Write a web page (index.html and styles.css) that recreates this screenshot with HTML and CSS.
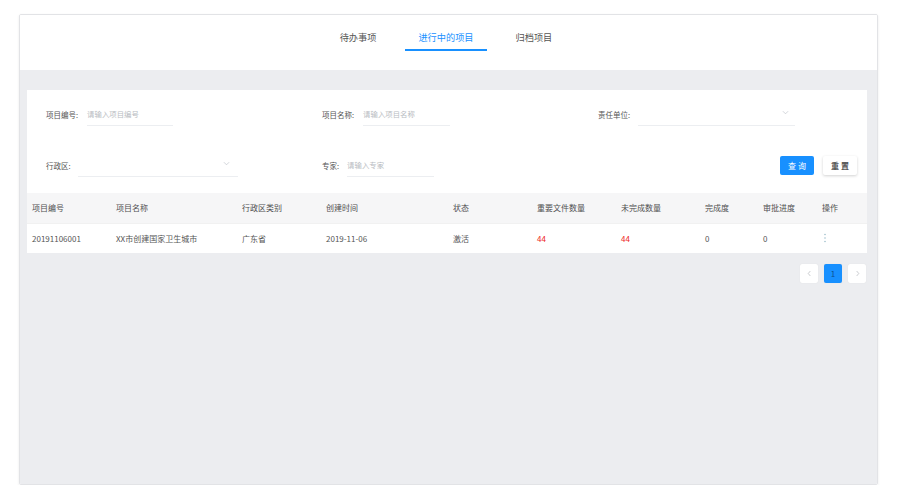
FILE: index.html
```html
<!DOCTYPE html>
<html lang="zh">
<head>
<meta charset="utf-8">
<link rel="stylesheet" href="styles.css">
</head>
<body>
<div class="frame">
  <div class="header">
    <div class="tab">待办事项</div>
    <div class="tab active">进行中的项目</div>
    <div class="tab">归档项目</div>
  </div>
  <div class="main">
    <div class="card">
      <div class="form">
        <div class="field"><span class="label">项目编号:</span><span class="input m9 w86">请输入项目编号</span></div>
        <div class="field"><span class="label">项目名称:</span><span class="input m9 w87">请输入项目名称</span></div>
        <div class="field"><span class="label">责任单位:</span><span class="select m8 w157"><svg class="chev" viewBox="0 0 8 5" width="7" height="5"><path d="M1 1l3 3 3-3" fill="none" stroke="#c0c4cc" stroke-width="0.8"/></svg></span></div>
        <div class="field"><span class="label">行政区:</span><span class="select m7 w160"><svg class="chev" viewBox="0 0 8 5" width="7" height="5"><path d="M1 1l3 3 3-3" fill="none" stroke="#c0c4cc" stroke-width="0.8"/></svg></span></div>
        <div class="field"><span class="label">专家:</span><span class="input m8 w87">请输入专家</span></div>
        <div class="field buttons"><button class="btn primary">查 询</button><button class="btn">重 置</button></div>
      </div>
      <table class="grid">
        <colgroup>
          <col style="width:84px"><col style="width:126px"><col style="width:84px"><col style="width:127px"><col style="width:84px"><col style="width:84px"><col style="width:84px"><col style="width:58px"><col style="width:59px"><col style="width:50px">
        </colgroup>
        <thead>
          <tr><th>项目编号</th><th>项目名称</th><th>行政区类别</th><th>创建时间</th><th>状态</th><th>重要文件数量</th><th>未完成数量</th><th>完成度</th><th>审批进度</th><th>操作</th></tr>
        </thead>
        <tbody>
          <tr><td>20191106001</td><td>XX市创建国家卫生城市</td><td>广东省</td><td>2019-11-06</td><td>激活</td><td class="red">44</td><td class="red">44</td><td>0</td><td>0</td><td><svg class="dots" viewBox="0 0 4 10" width="4" height="10"><circle cx="2" cy="1.5" r="0.8" fill="#9fbfcc"/><circle cx="2" cy="5" r="0.8" fill="#9fbfcc"/><circle cx="2" cy="8.5" r="0.8" fill="#9fbfcc"/></svg></td></tr>
        </tbody>
      </table>
    </div>
    <div class="pager">
      <span class="pg"><svg viewBox="0 0 6 8" width="5" height="7"><path d="M4 1L1.5 4 4 7" fill="none" stroke="#b0b4ba" stroke-width="0.8"/></svg></span>
      <span class="pg current">1</span>
      <span class="pg"><svg viewBox="0 0 6 8" width="5" height="7"><path d="M2 1l2.5 3L2 7" fill="none" stroke="#b0b4ba" stroke-width="0.8"/></svg></span>
    </div>
  </div>
</div>
</body>
</html>
```

FILE: styles.css
```css
* { box-sizing: border-box; }
html, body {
  margin: 0;
  padding: 0;
  background: #ffffff;
  font-family: "Noto Sans CJK SC", "Noto Sans", "Liberation Sans", sans-serif;
  color: #555;
}
.frame {
  margin: 14px 0 0 19px;
  width: 859px;
  height: 471px;
  border: 1px solid #e2e3e6;
  box-shadow: 0 1px 3px rgba(0,0,0,0.08);
  display: flex;
  flex-direction: column;
  border-radius: 2px;
  overflow: hidden;
}
.header {
  height: 55px;
  background: #fff;
  display: flex;
  justify-content: center;
  gap: 15px;
  padding-top: 15px;
  padding-right: 5px;
}
.tab {
  font-size: 9.2px;
  line-height: 14px;
  height: 21px;
  padding: 0 13.5px;
  color: #555;
  border-bottom: 2px solid transparent;
}
.tab.active {
  color: #1890ff;
  border-bottom-color: #1890ff;
}
.main {
  flex: 1;
  background: #ecedf0;
  padding: 20px 10px 0 7px;
}
.card {
  background: #fff;
  padding-top: 12px;
}
.form {
  display: grid;
  grid-template-columns: 276px 276px 1fr;
  grid-auto-rows: 24px;
  row-gap: 27px;
  padding: 0 10px 0 19px;
  margin-bottom: 16px;
}
.field {
  display: flex;
  align-items: center;
  height: 24px;
}
.label {
  color: #555;
  white-space: nowrap;
  font-size: 7.5px;
}
.input, .select {
  height: 24px;
  border-bottom: 1px solid #eceef1;
  display: flex;
  align-items: center;
  color: #b8bcc2;
  font-size: 7.4px;
}
.m7 { margin-left: 7px; }
.m8 { margin-left: 8px; }
.m9 { margin-left: 9px; }
.select { justify-content: flex-end; padding-right: 6px; }
.w86 { width: 86px; }
.w87 { width: 87px; }
.w157 { width: 157px; }
.w160 { width: 160px; padding-right: 8px; }
.chev { display: block; margin-top: -2px; }
.buttons {
  justify-content: flex-end;
  gap: 9px;
}
.btn {
  font-family: inherit;
  font-size: 8px;
  height: 19px;
  width: 34px;
  padding: 0;
  border: none;
  border-radius: 2px;
  background: #fff;
  color: #555;
  box-shadow: 0 1px 3px rgba(0,0,0,0.18);
  font-weight: bold;
}
.btn.primary {
  background: #1890ff;
  color: #fff;
  box-shadow: none;
  font-weight: normal;
}
.grid {
  width: 840px;
  border-collapse: collapse;
  table-layout: fixed;
  font-size: 8px;
}
.grid th, .grid td {
  text-align: left;
  font-weight: normal;
  padding: 0 0 0 5px;
  height: 30px;
  color: #555;
  white-space: nowrap;
}
.grid th {
  background: #f6f6f7;
  color: #505050;
}
.grid tbody tr { border-top: 1px solid #f1f1f1; }
.grid td.red { color: #ee1c1c; }
.dots { display: block; margin-left: 1px; }
.pager {
  display: flex;
  justify-content: flex-end;
  gap: 6px;
  margin-top: 11px;
  padding-right: 1px;
}
.pg {
  width: 18px;
  height: 19px;
  background: #fff;
  border-radius: 2px;
  display: flex;
  align-items: center;
  justify-content: center;
  font-size: 8px;
  box-shadow: 0 0 1px rgba(0,0,0,0.1);
}
.pg.current {
  background: #1890ff;
  color: #0d4f8f;
}
```
